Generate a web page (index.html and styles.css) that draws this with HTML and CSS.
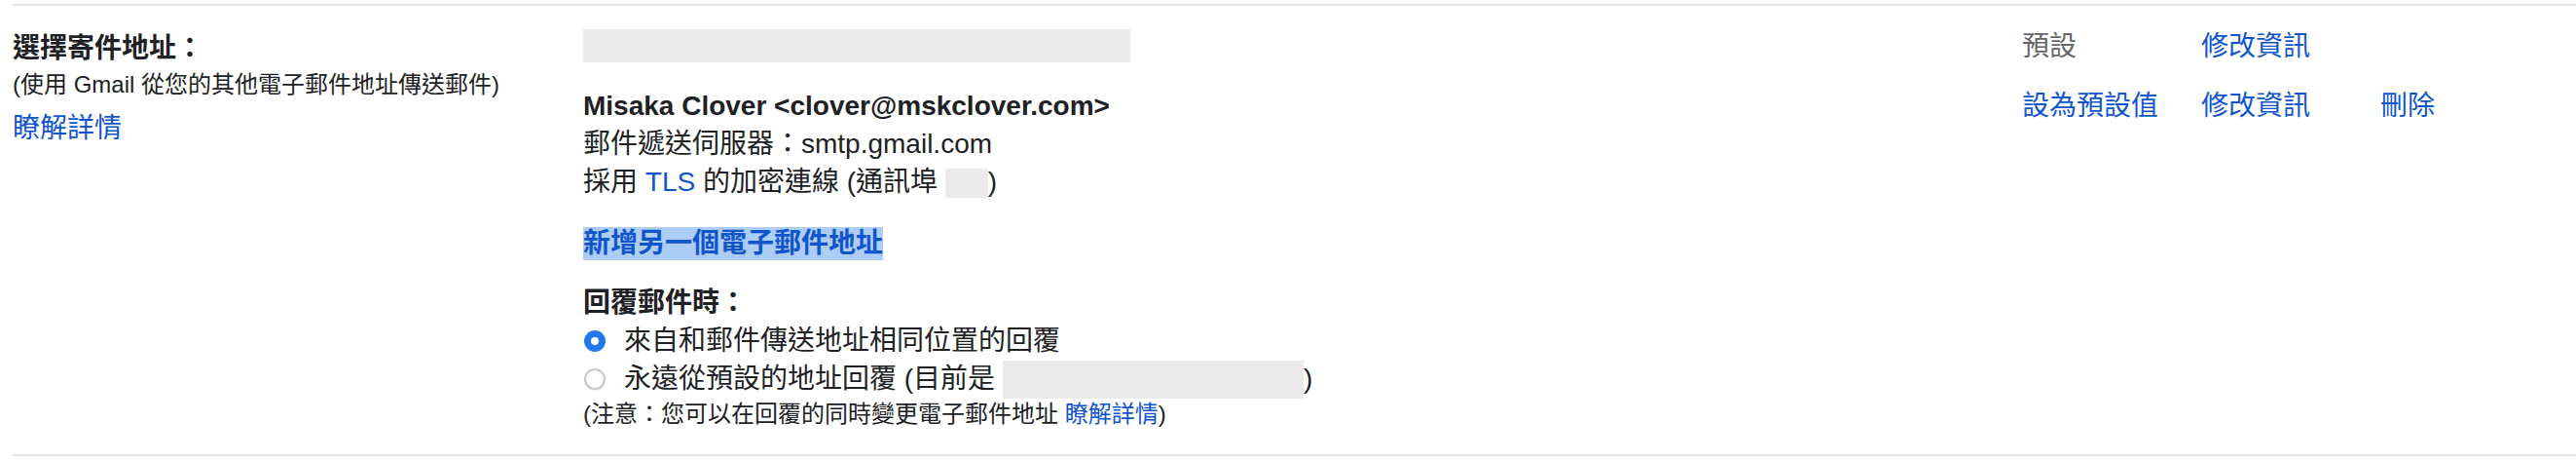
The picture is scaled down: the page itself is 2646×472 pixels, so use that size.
FILE: index.html
```html
<!DOCTYPE html>
<html lang="zh-Hant">
<head>
<meta charset="utf-8">
<title>選擇寄件地址</title>
<link rel="stylesheet" href="styles.css">
</head>
<body>
<div class="settings">
  <div class="label">
    <div class="label-title">選擇寄件地址：</div>
    <div class="label-note">(使用 Gmail 從您的其他電子郵件地址傳送郵件)</div>
    <a class="link label-link">瞭解詳情</a>
  </div>
  <div class="content">
    <div class="addresses">
      <div class="addr"><span class="redacted redacted-name"></span></div>
      <div class="status">預設</div>
      <div class="action"><a class="link">修改資訊</a></div>
      <div class="action"></div>

      <div class="addr">
        <div class="addr-name">Misaka Clover &lt;clover@mskclover.com&gt;</div>
        <div>郵件遞送伺服器：smtp.gmail.com</div>
        <div>採用 <a class="link">TLS</a> 的加密連線 (通訊埠 <span class="redacted redacted-port"></span>)</div>
      </div>
      <div class="action"><a class="link">設為預設值</a></div>
      <div class="action"><a class="link">修改資訊</a></div>
      <div class="action"><a class="link">刪除</a></div>
    </div>
    <div class="add-address"><a class="link add-link">新增另一個電子郵件地址</a></div>
    <div class="reply">
      <div class="reply-title">回覆郵件時：</div>
      <label class="radio-row"><span class="radio checked"></span><span>來自和郵件傳送地址相同位置的回覆</span></label>
      <label class="radio-row"><span class="radio"></span><span>永遠從預設的地址回覆 (目前是 <span class="redacted redacted-default"></span>)</span></label>
      <div class="reply-note">(注意：您可以在回覆的同時變更電子郵件地址 <a class="link">瞭解詳情</a>)</div>
    </div>
  </div>
</div>
</body>
</html>
```

FILE: styles.css
```css
* { box-sizing: border-box; }

body {
  margin: 0;
  background: #fff;
  color: #202124;
  font-family: "Liberation Sans", "Noto Sans CJK TC", sans-serif;
  font-size: 28px;
  line-height: 39px;
}

.settings {
  margin: 4px 0 0 13px;
  border-top: 2px solid #e5e5e5;
  border-bottom: 2px solid #e5e5e5;
  display: grid;
  grid-template-columns: 586px 1fr;
}

.label { padding-top: 24px; }
.label-title { font-weight: bold; }
.label-note { font-size: 24px; line-height: 36px; }
.label-link { display: block; margin-top: 7px; }

.link { color: #1155cc; text-decoration: none; cursor: pointer; }

.content { padding: 12px 0 25px; }

.addresses {
  display: grid;
  grid-template-columns: 1478px 184px 184px 1fr;
}
.addresses > div { padding: 10px 0; }
.addresses > div:nth-child(n+5) { padding: 12px 0 8px; }

.addr-name { font-weight: bold; }
.status { color: #666; }

.redacted { display: inline-block; background: #ebebeb; }
.redacted-name { display: block; width: 562px; height: 34px; margin: 2px 0 3px; }
.redacted-port { width: 44px; height: 30px; vertical-align: -7px; }
.redacted-default { width: 309px; height: 39px; vertical-align: top; margin-top: 1px; }

.add-address { margin-top: 19px; line-height: 34px; }
.add-link { display: inline-block; font-weight: bold; background: #accdf6; }

.reply { margin-top: 25px; }
.reply-title { font-weight: bold; line-height: 38px; }

.radio-row { display: flex; align-items: center; gap: 19px; }
.radio {
  flex: none;
  width: 22px;
  height: 22px;
  margin-left: 1px;
  border-radius: 50%;
  border: 2px solid #c8c8c8;
  background: #fff;
  box-shadow: 0 1px 1px rgba(0, 0, 0, 0.08);
}
.radio.checked { border: 7px solid #2378ea; box-shadow: none; }

.reply-note { font-size: 24px; line-height: 32px; }
```
